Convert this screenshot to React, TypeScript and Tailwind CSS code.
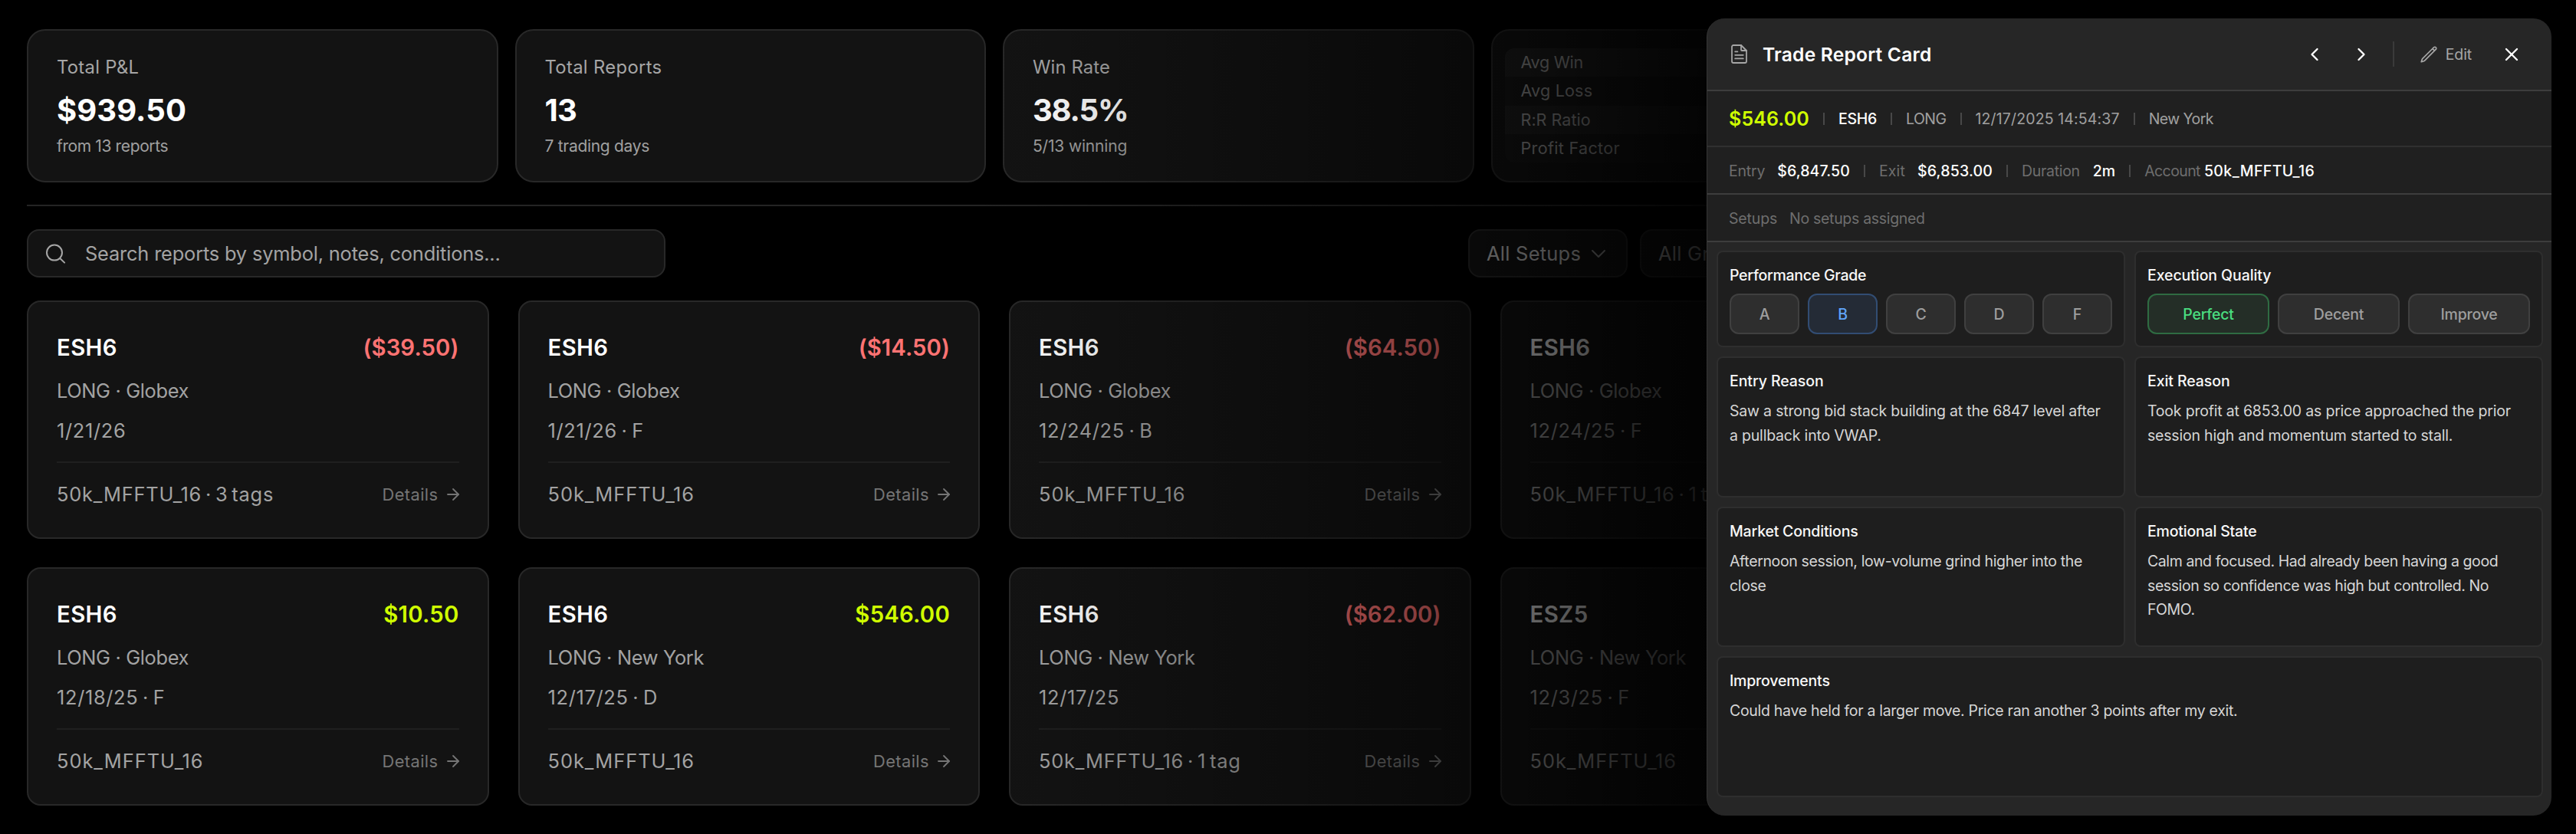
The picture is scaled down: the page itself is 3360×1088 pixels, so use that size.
import React from "react";
import { ArrowRight, ChevronDown, ChevronLeft, ChevronRight, X } from "lucide-react";

type Trade = {
  symbol: string;
  pnl: string;
  side: string;
  date: string;
  account: string;
};

const trades: Trade[] = [
  { symbol: "ESH6", pnl: "($39.50)", side: "LONG · Globex", date: "1/21/26", account: "50k_MFFTU_16 · 3 tags" },
  { symbol: "ESH6", pnl: "($14.50)", side: "LONG · Globex", date: "1/21/26 · F", account: "50k_MFFTU_16" },
  { symbol: "ESH6", pnl: "($64.50)", side: "LONG · Globex", date: "12/24/25 · B", account: "50k_MFFTU_16" },
  { symbol: "ESH6", pnl: "", side: "LONG · Globex", date: "12/24/25 · F", account: "50k_MFFTU_16 · 1 tag" },
  { symbol: "ESH6", pnl: "$10.50", side: "LONG · Globex", date: "12/18/25 · F", account: "50k_MFFTU_16" },
  { symbol: "ESH6", pnl: "$546.00", side: "LONG · New York", date: "12/17/25 · D", account: "50k_MFFTU_16" },
  { symbol: "ESH6", pnl: "($62.00)", side: "LONG · New York", date: "12/17/25", account: "50k_MFFTU_16 · 1 tag" },
  { symbol: "ESZ5", pnl: "", side: "LONG · New York", date: "12/3/25 · F", account: "50k_MFFTU_16" },
];

function StatCard({ label, value, note, labelTracking, valueTracking, noteTracking }: {
  label: string;
  value: string;
  note: string;
  labelTracking: string;
  valueTracking: string;
  noteTracking: string;
}) {
  return (
    <div className="h-[200px] rounded-3xl border-2 border-[#282828] bg-[#131313] px-[37px] pt-[30px]">
      <div className={`text-[23.8px] leading-9 text-[#a6a6a6] ${labelTracking}`}>{label}</div>
      <div className={`mt-[14px] text-[40px] font-bold leading-[48px] text-white ${valueTracking}`}>{value}</div>
      <div className={`mt-2 text-[21px] leading-[30px] text-[#a0a0a0] ${noteTracking}`}>{note}</div>
    </div>
  );
}

function TradeCard({ trade }: { trade: Trade }) {
  const loss = trade.pnl.startsWith("(");
  const hasYork = trade.side.endsWith("York");
  return (
    <div className="h-[311px] rounded-[18px] border-2 border-[#282828] bg-[#131313] px-[37px] pt-10">
      <div className="flex h-10 items-center justify-between text-[29.3px] font-semibold leading-10">
        <span className="tracking-[0.014em] text-white">{trade.symbol}</span>
        <span className={loss ? "tracking-[0.003em] text-[#ff7373]" : "tracking-[0.008em] text-[#d0ff00]"}>{trade.pnl}</span>
      </div>
      <div className={`mt-[18px] text-[25.4px] leading-9 text-[#a3a3a3] ${hasYork ? "tracking-[-0.013em]" : "tracking-[-0.014em]"}`}>
        {trade.side}
      </div>
      <div className="mt-4 text-[25.4px] leading-9 tracking-[0.026em] text-[#a3a3a3] [word-spacing:-0.08em]">{trade.date}</div>
      <div className="mt-[22px] h-0.5 bg-[#1f1f1f]" />
      <div className="mt-[23px] flex h-9 items-center justify-between">
        <span className={`text-[25.4px] leading-9 text-[#a3a3a3] ${trade.account.includes("tag") ? "tracking-[0.031em] [word-spacing:-0.12em]" : "tracking-[0.039em]"}`}>
          {trade.account}
        </span>
        <span className="-mr-1 flex items-center gap-[7px] text-[21.8px] leading-9 tracking-[0.02em] text-[#757575]">
          Details
          <ArrowRight size={24} strokeWidth={1.8} />
        </span>
      </div>
    </div>
  );
}

function Select({ label }: { label: string }) {
  return (
    <div className="flex h-[63px] w-52 items-center justify-between rounded-2xl border-2 border-[#282828] bg-[#131313] pl-[22px] pr-5">
      <span className="whitespace-nowrap text-[25.4px] leading-9 tracking-[0.011em] text-[#d4d4d4]">{label}</span>
      <ChevronDown size={32} strokeWidth={1.5} className="text-[#a0a0a0]" />
    </div>
  );
}

function Sep() {
  return <span className="mx-[18px] h-4 w-0.5 bg-[#484848]" />;
}

function Panel({ title, tracking, className, children }: {
  title: string;
  tracking: string;
  className?: string;
  children: React.ReactNode;
}) {
  return (
    <section className={`rounded-lg border-2 border-[#2e2e2e] bg-[#1e1e1e] px-[15px] pt-4 ${className ?? ""}`}>
      <h3 className={`text-[19.5px] font-medium leading-7 text-[#f8f8f8] ${tracking}`}>{title}</h3>
      {children}
    </section>
  );
}

function Body({ text, tracking }: { text: string; tracking: string }) {
  return <p className={`mt-2.5 whitespace-pre text-[19.5px] leading-[31.5px] text-[#d6d6d6] ${tracking}`}>{text}</p>;
}

const idle = "border-[#404040] bg-[#2e2e2e] text-[#9e9e9e]";
const blue = "border-[#324d73] bg-[#242b36] text-[#60a5fa]";
const green = "border-[#2f6b42] bg-[#242e27] text-[#4ade80]";

function Choice({ label, tone }: { label: string; tone: string }) {
  return (
    <button className={`flex h-[53px] flex-1 items-center justify-center rounded-xl border-2 text-[19.5px] font-medium leading-7 tracking-[-0.01em] ${tone}`}>
      {label}
    </button>
  );
}

function ReportModal() {
  return (
    <aside className="absolute left-[2226px] top-6 flex h-[1040px] w-[1102px] flex-col overflow-hidden rounded-3xl border-l border-[#363636] bg-[#262626]">
      <header className="flex h-[95px] items-center border-b-2 border-[#3d3d3d] pl-[31px] pr-[38px]">
        <svg width="21" height="25" viewBox="0 0 21 25" fill="none" stroke="#a6a6a6" strokeWidth="1.8" strokeLinejoin="round" strokeLinecap="round">
          <path d="M13 1H3a2 2 0 0 0-2 2v19a2 2 0 0 0 2 2h15a2 2 0 0 0 2-2V8Z" />
          <path d="M13 1v6a1 1 0 0 0 1 1h6" />
          <path d="M5.2 9.3h3.2M5.2 13.8h10.6M5.2 18.4h10.6" />
        </svg>
        <h2 className="ml-5 text-[24.6px] font-semibold leading-9 tracking-[0.008em] text-white">Trade Report Card</h2>
        <div className="ml-auto flex items-center text-white">
          <ChevronLeft size={28} strokeWidth={2} />
          <ChevronRight size={28} strokeWidth={2} className="ml-[33px]" />
          <span className="ml-[27px] h-[33px] w-0.5 bg-[#3a3a3a]" />
          <svg className="ml-[33px]" width="24" height="24" viewBox="0 0 24 24" fill="none" stroke="#a6a6a6" strokeWidth="1.7" strokeLinecap="round" strokeLinejoin="round">
            <path d="m16.862 4.487 1.687-1.688a1.875 1.875 0 1 1 2.652 2.652L6.832 19.82a4.5 4.5 0 0 1-1.897 1.13l-2.685.8.8-2.685a4.5 4.5 0 0 1 1.13-1.897L16.863 4.487Zm0 0L19.5 7.125" />
          </svg>
          <span className="ml-2.5 text-[19.5px] leading-7 tracking-[-0.007em] text-[#a6a6a6]">Edit</span>
          <X size={28} strokeWidth={2} className="ml-[38px]" />
        </div>
      </header>

      <div className="flex h-[73px] items-center whitespace-nowrap border-b-2 border-[#303030] bg-[#202020] pl-7 pt-px text-[19.5px] leading-7 text-[#a0a0a0]">
        <span className="text-[25px] font-semibold tracking-[0.005em] text-[#d0ff00]">$546.00</span>
        <Sep />
        <span className="font-medium tracking-[-0.015em] text-white">ESH6</span>
        <Sep />
        <span className="tracking-[-0.027em]">LONG</span>
        <Sep />
        <span className="tracking-[0.007em]">12/17/2025 14:54:37</span>
        <Sep />
        <span className="tracking-[-0.031em]">New York</span>
      </div>

      <div className="flex h-[62px] items-center whitespace-nowrap border-b-2 border-[#3d3d3d] bg-[#202020] pl-7 pt-px text-[19.5px] leading-7 text-[#6e6e6e]">
        <span className="tracking-[-0.01em]">Entry</span>
        <span className="ml-4 font-medium tracking-[0.005em] text-white">$6,847.50</span>
        <Sep />
        <span className="tracking-[0.007em]">Exit</span>
        <span className="ml-4 font-medium tracking-[0.01em] text-white">$6,853.00</span>
        <Sep />
        <span className="tracking-[-0.016em]">Duration</span>
        <span className="ml-[17px] font-medium text-white">2m</span>
        <Sep />
        <span className="tracking-[-0.03em]">Account</span>
        <span className="ml-[5px] font-medium tracking-[0.02em] text-white">50k_MFFTU_16</span>
      </div>

      <div className="flex h-[62px] items-center whitespace-nowrap border-b-2 border-[#3d3d3d] bg-[#202020] pl-7 pt-px text-[19.5px] leading-7 text-[#6e6e6e]">
        <span className="tracking-[-0.008em]">Setups</span>
        <span className="ml-4 tracking-[-0.016em]">No setups assigned</span>
      </div>

      <div className="grid grid-cols-2 grid-rows-[126px_184px_183px_184px] gap-3 pl-3 pr-[11px] pt-[11px]">
        <Panel title="Performance Grade" tracking="tracking-[-0.014em]">
          <div className="mt-2.5 flex gap-[11px]">
            <Choice label="A" tone={idle} />
            <Choice label="B" tone={blue} />
            <Choice label="C" tone={idle} />
            <Choice label="D" tone={idle} />
            <Choice label="F" tone={idle} />
          </div>
        </Panel>
        <Panel title="Execution Quality" tracking="tracking-[-0.004em]">
          <div className="mt-2.5 grid grid-cols-3 gap-[11px]">
            <Choice label="Perfect" tone={green} />
            <Choice label="Decent" tone={idle} />
            <Choice label="Improve" tone={idle} />
          </div>
        </Panel>
        <Panel title="Entry Reason" tracking="tracking-[-0.004em]">
          <Body tracking="tracking-[-0.01em]" text={"Saw a strong bid stack building at the 6847 level after\na pullback into VWAP."} />
        </Panel>
        <Panel title="Exit Reason" tracking="tracking-[-0.004em]">
          <Body tracking="tracking-[-0.01em]" text={"Took profit at 6853.00 as price approached the prior\nsession high and momentum started to stall."} />
        </Panel>
        <Panel title="Market Conditions" tracking="tracking-[-0.01em]">
          <Body tracking="tracking-[-0.018em]" text={"Afternoon session, low-volume grind higher into the\nclose"} />
        </Panel>
        <Panel title="Emotional State" tracking="tracking-[-0.01em]">
          <Body tracking="tracking-[-0.021em]" text={"Calm and focused. Had already been having a good\nsession so confidence was high but controlled. No\nFOMO."} />
        </Panel>
        <Panel title="Improvements" tracking="tracking-[-0.01em]" className="col-span-2">
          <Body tracking="tracking-[-0.0155em]" text="Could have held for a larger move. Price ran another 3 points after my exit." />
        </Panel>
      </div>
    </aside>
  );
}

export default function App() {
  return (
    <div className="relative h-[1088px] w-[3360px] overflow-hidden bg-black pl-[35px] pt-[38px] font-['Inter',sans-serif]">
      <main className="w-[2524px]">
        <div className="grid grid-cols-4 gap-[22px]">
          <StatCard label="Total P&L" value="$939.50" note="from 13 reports" labelTracking="tracking-[0.012em]" valueTracking="tracking-[0.002em]" noteTracking="tracking-[-0.018em]" />
          <StatCard label="Total Reports" value="13" note="7 trading days" labelTracking="tracking-[0.014em]" valueTracking="tracking-[-0.02em]" noteTracking="tracking-[-0.014em]" />
          <StatCard label="Win Rate" value="38.5%" note="5/13 winning" labelTracking="tracking-[0.005em]" valueTracking="tracking-[-0.03em]" noteTracking="tracking-[-0.008em]" />
          <div className="h-[200px] rounded-3xl border-2 border-[#282828] bg-[#131313] px-4 pt-[23px]">
            <div className="overflow-hidden rounded-xl bg-[#171717] text-[21.5px] leading-[37.3px] text-[#a6a6a6]">
              <div className="bg-[#202020] pl-[21px] tracking-[-0.013em]">Avg Win</div>
              <div className="pl-[21px] tracking-[0.01em]">Avg Loss</div>
              <div className="bg-[#202020] pl-[21px] tracking-[0.002em]">R:R Ratio</div>
              <div className="pl-[21px] tracking-[0.016em]">Profit Factor</div>
            </div>
          </div>
        </div>

        <div className="mt-[29px] h-0.5 bg-[#242424]" />

        <div className="mt-[30px] flex gap-4">
          <div className="flex h-[63px] w-[833px] items-center rounded-2xl border-2 border-[#282828] bg-[#131313] pl-[22px]">
            <svg width="28" height="28" viewBox="0 0 28 28" fill="none" stroke="#a6a6a6" strokeWidth="2" strokeLinecap="round">
              <circle cx="12" cy="12.6" r="10" />
              <path d="m19.5 20.2 5.6 5.4" />
            </svg>
            <span className="ml-6 text-[25.4px] leading-9 tracking-[-0.007em] text-[#a3a3a3]">Search reports by symbol, notes, conditions...</span>
          </div>
          <div className="ml-auto mr-[212px] flex gap-4">
            <Select label="All Setups" />
            <Select label="All Grades" />
          </div>
        </div>

        <div className="mt-[30px] grid grid-cols-4 gap-x-[38px] gap-y-[37px]">
          {trades.map((trade, i) => (
            <TradeCard key={i} trade={trade} />
          ))}
        </div>
      </main>

      <div className="pointer-events-none absolute inset-0 bg-[linear-gradient(to_right,rgba(0,0,0,0)_1250px,rgba(0,0,0,0.04)_1350px,rgba(0,0,0,0.14)_1470px,rgba(0,0,0,0.44)_1820px,rgba(0,0,0,0.63)_2020px,rgba(0,0,0,0.84)_2200px,rgba(0,0,0,1)_2300px)]" />

      <ReportModal />
    </div>
  );
}
